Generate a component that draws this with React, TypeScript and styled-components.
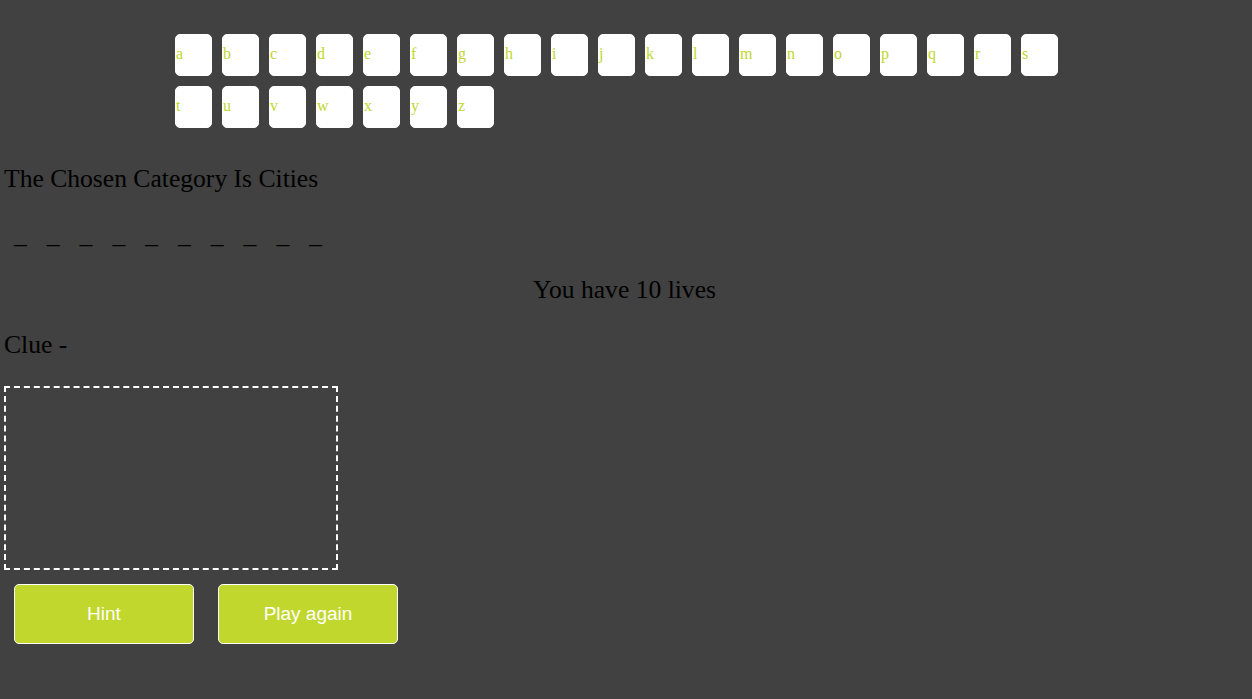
import React from "react";
import styled, { createGlobalStyle } from "styled-components";

const GlobalStyle = createGlobalStyle`
  html, body {
    margin: 0;
    padding: 0;
    background: #414141;
  }
  body {
    font-family: "Liberation Serif", "Times New Roman", serif;
    color: #000;
  }
`;

const Page = styled.div`
  padding: 0 4px;
`;

const Alphabet = styled.ul`
  list-style: none;
  margin: 34px auto 0;
  padding: 0;
  width: 902px;
  display: flex;
  flex-wrap: wrap;
  gap: 10px;
`;

const Letter = styled.li`
  box-sizing: content-box;
  width: 35px;
  height: 30px;
  padding-top: 10px;
  background: #fff;
  color: #c1d72e;
  border: 1px solid #fff;
  border-radius: 5px;
  font-size: 16px;
  line-height: normal;
  cursor: pointer;
`;

const Category = styled.p`
  margin: 36px 0 0;
  font-size: 25.6px;
  font-weight: normal;
`;

const Word = styled.ul`
  list-style: none;
  margin: 26px 0 0;
  padding: 0;
  display: flex;
`;

const Guess = styled.li`
  padding: 0 10px;
  font-size: 25.6px;
`;

const Lives = styled.p`
  margin: 25px 0 0;
  padding-right: 3px;
  font-size: 25.6px;
  text-align: center;
`;

const Clue = styled.p`
  margin: 25px 0 0;
  font-size: 25.6px;
`;

const Stickman = styled.canvas`
  display: block;
  margin-top: 26px;
  padding: 15px;
  border: 2px dashed #fff;
`;

const Controls = styled.div`
  display: flex;
  gap: 24px;
  margin-top: 14px;
  padding-left: 10px;
`;

const ActionButton = styled.button`
  box-sizing: border-box;
  width: 180px;
  height: 60px;
  background: #c1d72e;
  color: #fff;
  border: 1px solid #fff;
  border-radius: 5px;
  font-family: "Liberation Sans", Arial, sans-serif;
  font-size: 19px;
  cursor: pointer;
`;

const letters = "abcdefghijklmnopqrstuvwxyz".split("");

export default function App() {
  return (
    <Page>
      <GlobalStyle />
      <Alphabet>
        {letters.map((l) => (
          <Letter key={l}>{l}</Letter>
        ))}
      </Alphabet>
      <Category>The Chosen Category Is Cities</Category>
      <Word>
        {Array.from({ length: 10 }).map((_, i) => (
          <Guess key={i}>_</Guess>
        ))}
      </Word>
      <Lives>You have 10 lives</Lives>
      <Clue>Clue -</Clue>
      <Stickman width={300} height={150} />
      <Controls>
        <ActionButton>Hint</ActionButton>
        <ActionButton>Play again</ActionButton>
      </Controls>
    </Page>
  );
}
